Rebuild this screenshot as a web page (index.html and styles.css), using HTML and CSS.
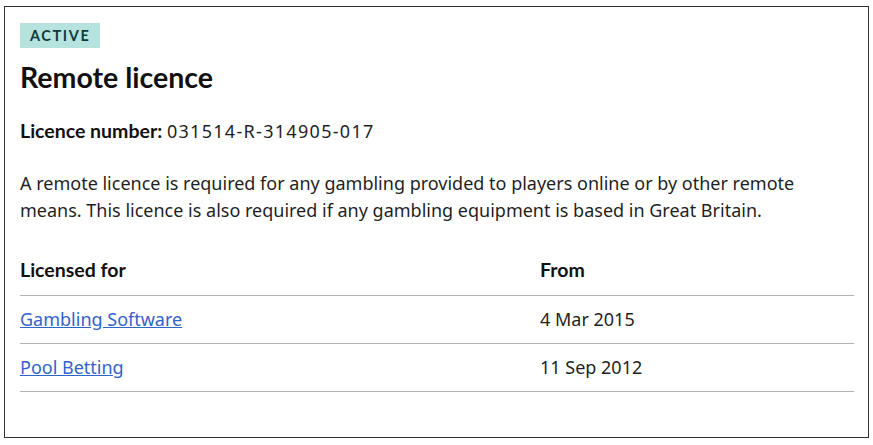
FILE: index.html
```html
<!DOCTYPE html>
<html lang="en">
<head>
    <meta charset="UTF-8">
    <title>Remote licence</title>
    <link rel="stylesheet" href="styles.css">
</head>
<body>
    <div class="card">
        <span class="badge">Active</span>
        <h2 class="title">Remote licence</h2>

        <p class="number"><strong>Licence number:</strong> <span>031514-R-314905-017</span></p>

        <p class="desc">A remote licence is required for any gambling provided to players online or by other remote means. This licence is also required if any gambling equipment is based in Great Britain.</p>

        <table class="activities">
            <thead>
                <tr>
                    <th>Licensed for</th>
                    <th>From</th>
                </tr>
            </thead>
            <tbody>
                <tr>
                    <td><a href="#">Gambling Software</a></td>
                    <td>4 Mar 2015</td>
                </tr>
                <tr>
                    <td><a href="#">Pool Betting</a></td>
                    <td>11 Sep 2012</td>
                </tr>
            </tbody>
        </table>
    </div>
</body>
</html>
```

FILE: styles.css
```css
body {
    margin: 0;
    padding: 6px 4px 8px 4px;
    font-family: "Noto Sans", Arial, sans-serif;
    color: #1f1f1f;
    background: white;
}
.card {
    border: 1px solid #333;
    padding: 16px 14px 45px 15px;
}
.badge {
    display: inline-block;
    background: #b6e3de;
    color: #0e3a3a;
    font-family: Lato, sans-serif;
    font-weight: 700;
    font-size: 14.5px;
    letter-spacing: 1.6px;
    text-transform: uppercase;
    padding: 4px 10px 4px 10px;
    line-height: 17px;
}
.title {
    font-family: Lato, sans-serif;
    font-size: 28.5px;
    font-weight: 700;
    margin: 12px 0 0;
    line-height: 34px;
    color: #111;
}
.number {
    font-size: 18px;
    margin: 23px 0 0;
    line-height: 28px;
}
.number strong {
    font-family: Lato, sans-serif;
    font-size: 19.5px;
    color: #111;
}
.number span {
    letter-spacing: 1.3px;
}
.desc {
    font-size: 18px;
    line-height: 27px;
    margin: 25px 0 0;
}
.activities {
    width: 100%;
    border-collapse: collapse;
    margin-top: 24px;
    font-size: 18px;
}
.activities th {
    font-family: Lato, sans-serif;
    font-size: 19.5px;
    font-weight: 700;
    text-align: left;
    padding: 11px 0 14px;
    border-bottom: 1px solid #b3b3b3;
    line-height: 22px;
    color: #111;
}
.activities td {
    padding: 12px 0 13px;
    border-bottom: 1px solid #b3b3b3;
    line-height: 22px;
}
.activities th:first-child,
.activities td:first-child {
    width: 520px;
}
.activities a {
    color: #3263c9;
}
```
